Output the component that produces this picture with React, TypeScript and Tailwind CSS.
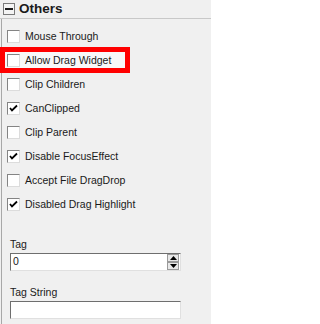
import React from "react"

const font = { fontFamily: '"Liberation Sans", Arial, sans-serif' }

interface Item {
  label: string
  checked: boolean
  highlight?: boolean
}

const items: Item[] = [
  { label: "Mouse Through", checked: false },
  { label: "Allow Drag Widget", checked: false, highlight: true },
  { label: "Clip Children", checked: false },
  { label: "CanClipped", checked: true },
  { label: "Clip Parent", checked: false },
  { label: "Disable FocusEffect", checked: true },
  { label: "Accept File DragDrop", checked: false },
  { label: "Disabled Drag Highlight", checked: true },
]

function CheckBox({ checked }: { checked: boolean }) {
  return (
    <div className="relative w-[13px] h-[13px] bg-white border border-t-[#848484] border-l-[#848484] border-r-[#dcdcdc] border-b-[#dcdcdc] shrink-0">
      {checked && (
        <svg viewBox="0 0 11 11" className="absolute inset-0 w-[11px] h-[11px]">
          <path d="M2 5 L4 7.5 L9 2.5" stroke="#000" strokeWidth="1.8" fill="none" />
        </svg>
      )}
    </div>
  )
}

function Row({ item }: { item: Item }) {
  return (
    <div className="relative h-6 flex items-center">
      {item.highlight && (
        <div className="absolute left-[-2px] top-[-1px] w-[130px] h-[26px] border-[5px] border-[#ff0000] bg-[#f8f8f8]" />
      )}
      <div className="relative flex items-center pl-[5px] gap-[5px]">
        <CheckBox checked={item.checked} />
        <span className="text-[10.5px] text-[#1a1a1a] leading-none">{item.label}</span>
      </div>
    </div>
  )
}

export default function App() {
  return (
    <div className="w-[211px] h-[324px] bg-[#f0f0f0] overflow-hidden" style={font}>
      {/* header */}
      <div className="h-[19px] flex items-center gap-[4px] pl-[3px] border-b border-[#c8c8c8]">
        <div className="w-[12px] h-[12px] border border-[#7a7a7a] bg-[#f4f4f4] flex items-center justify-center">
          <div className="w-[8px] h-[2px] bg-[#1a1a1a]" />
        </div>
        <span className="text-[13.5px] font-bold text-[#1a1a1a]">Others</span>
      </div>

      <div className="ml-[1px] border-l border-[#a8a8a8] h-[305px] pt-[5px]">
        {items.map((it) => (
          <Row key={it.label} item={it} />
        ))}

        <div className="mt-[20px] pl-[8px] flex flex-col">
          <span className="text-[10.5px] text-[#1a1a1a] h-[16px] leading-[16px]">Tag</span>
          <div className="mt-[1px] w-[171px] h-[18px] bg-white border border-t-[#6e6e6e] border-l-[#6e6e6e] border-r-[#e0e0e0] border-b-[#e0e0e0] flex items-center justify-between">
            <span className="text-[10.5px] pl-[2px] text-[#1a1a1a]">0</span>
            <div className="flex flex-col mr-[1px]">
              <div className="w-[12px] h-[8px] bg-[#e8e8e8] border border-[#9a9a9a] flex items-center justify-center">
                <svg viewBox="0 0 7 4" className="w-[7px] h-[4px]">
                  <path d="M0 4 L3.5 0 L7 4 Z" fill="#000" />
                </svg>
              </div>
              <div className="w-[12px] h-[8px] bg-[#e8e8e8] border border-[#9a9a9a] flex items-center justify-center">
                <svg viewBox="0 0 7 4" className="w-[7px] h-[4px]">
                  <path d="M0 0 L7 0 L3.5 4 Z" fill="#000" />
                </svg>
              </div>
            </div>
          </div>
          <span className="mt-[13px] text-[10.5px] text-[#1a1a1a] h-[16px] leading-[16px]">Tag String</span>
          <div className="mt-[1px] w-[171px] h-[18px] bg-white border border-t-[#6e6e6e] border-l-[#6e6e6e] border-r-[#e0e0e0] border-b-[#e0e0e0]" />
        </div>
      </div>
    </div>
  )
}
